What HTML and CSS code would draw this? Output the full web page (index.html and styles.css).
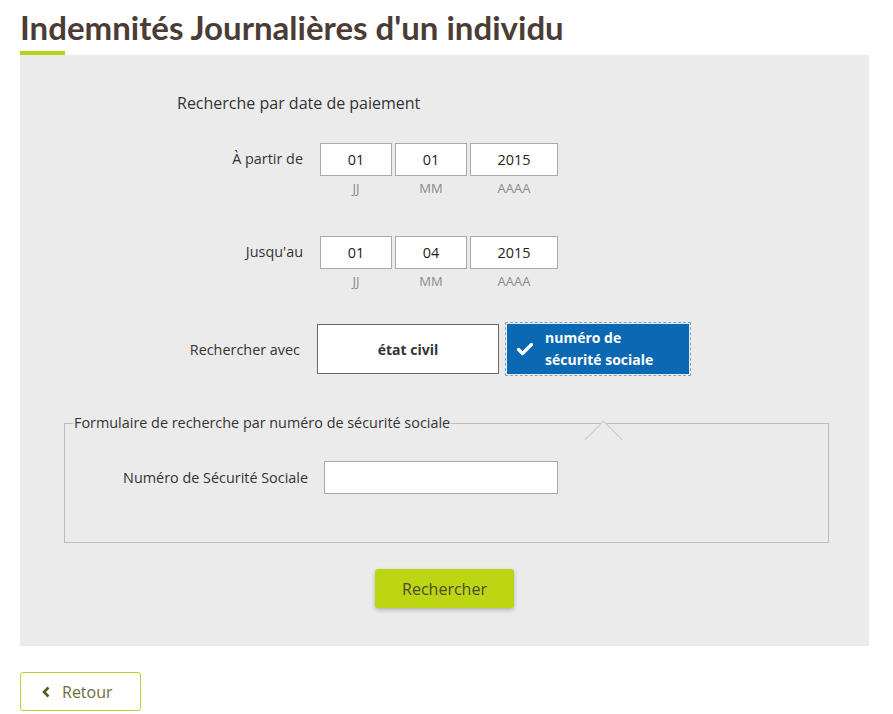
FILE: index.html
```html
<!DOCTYPE html>
<html lang="fr">
<head>
    <meta charset="UTF-8">
    <meta name="viewport" content="width=device-width, initial-scale=1.0">
    <title>Indemnités Journalières d'un individu</title>
    <link rel="stylesheet" href="styles.css">
</head>
<body>
    <h1 class="page-title">Indemnités Journalières d'un individu</h1>
    <div class="panel">
        <h2 class="panel-title">Recherche par date de paiement</h2>

        <div class="row">
            <label class="row-label">À partir de</label>
            <div class="date-group">
                <div class="date-part">
                    <input class="field field-short" type="text" value="01">
                    <span class="hint">JJ</span>
                </div>
                <div class="date-part">
                    <input class="field field-short" type="text" value="01">
                    <span class="hint">MM</span>
                </div>
                <div class="date-part">
                    <input class="field field-year" type="text" value="2015">
                    <span class="hint">AAAA</span>
                </div>
            </div>
        </div>

        <div class="row row-second">
            <label class="row-label">Jusqu'au</label>
            <div class="date-group">
                <div class="date-part">
                    <input class="field field-short" type="text" value="01">
                    <span class="hint">JJ</span>
                </div>
                <div class="date-part">
                    <input class="field field-short" type="text" value="04">
                    <span class="hint">MM</span>
                </div>
                <div class="date-part">
                    <input class="field field-year" type="text" value="2015">
                    <span class="hint">AAAA</span>
                </div>
            </div>
        </div>

        <div class="row row-toggle">
            <label class="row-label toggle-label">Rechercher avec</label>
            <div class="toggle-group">
                <button class="toggle" type="button">état civil</button>
                <button class="toggle toggle-active" type="button">
                    <svg class="check" width="16" height="14" viewBox="0 0 16 14">
                        <path d="M1.5 7.5 L5.5 11.5 L14.5 2.5" fill="none" stroke="#fff" stroke-width="3.2" stroke-linecap="round" stroke-linejoin="round"/>
                    </svg>
                    <span>numéro de<br>sécurité sociale</span>
                </button>
            </div>
        </div>

        <fieldset class="subform">
            <legend>Formulaire de recherche par numéro de sécurité sociale</legend>
            <span class="notch"></span>
            <div class="row">
                <label class="row-label nss-label">Numéro de Sécurité Sociale</label>
                <input class="field field-nss" type="text">
            </div>
        </fieldset>

        <div class="actions">
            <button class="btn-search" type="submit">Rechercher</button>
        </div>
    </div>

    <button class="btn-back" type="button">
        <svg width="10" height="12" viewBox="0 0 10 12">
            <path d="M7.5 1.5 L3 6 L7.5 10.5" fill="none" stroke="#5a5a1e" stroke-width="2.6"/>
        </svg>
        Retour
    </button>
</body>
</html>
```

FILE: styles.css
```css
body {
    margin: 0;
    padding: 0 24px 0 20px;
    font-family: "Open Sans", "Liberation Sans", sans-serif;
    color: #333;
    background: #fff;
}
.page-title {
    position: relative;
    margin: 0;
    padding-top: 8px;
    height: 55px;
    box-sizing: border-box;
    font-family: Lato, "Open Sans", sans-serif;
    font-weight: 700;
    font-size: 33px;
    line-height: 38px;
    color: #4b3c35;
}
.page-title::after {
    content: "";
    position: absolute;
    left: 0;
    bottom: 0;
    width: 45px;
    height: 4px;
    background: #b6d21c;
}
.panel {
    background: #ebebeb;
    padding: 37px 0 38px;
}
.panel-title {
    margin: 0 0 29px 157px;
    font-size: 16px;
    font-weight: 400;
    line-height: 22px;
    color: #333;
}
.row {
    display: flex;
    align-items: flex-start;
}
.row-second {
    margin-top: 39px;
}
.row-toggle {
    margin-top: 34px;
    align-items: center;
}
.row-label {
    width: 300px;
    box-sizing: border-box;
    padding-right: 17px;
    text-align: right;
    font-size: 14.4px;
    line-height: 31px;
    color: #333;
}
.toggle-label {
    width: 297px;
}
.date-group {
    display: flex;
    gap: 3px;
}
.date-part {
    display: flex;
    flex-direction: column;
    align-items: center;
}
.field {
    box-sizing: border-box;
    height: 33px;
    border: 1px solid #a9a9a9;
    background: #fff;
    font-family: inherit;
    font-size: 14.4px;
    color: #222;
    text-align: center;
    padding: 0;
}
.field-short {
    width: 72px;
}
.field-year {
    width: 88px;
}
.hint {
    margin-top: 3px;
    font-size: 13px;
    line-height: 18px;
    color: #8a8a8a;
}
.toggle-group {
    display: flex;
    align-items: center;
    gap: 8px;
}
.toggle {
    box-sizing: border-box;
    width: 182px;
    height: 50px;
    border: 1px solid #666;
    background: #fff;
    font-family: inherit;
    font-size: 14px;
    font-weight: 700;
    color: #333;
}
.toggle-active {
    display: flex;
    align-items: center;
    gap: 12px;
    padding: 0 0 0 10px;
    border: none;
    background: #0b69b3;
    color: #fff;
    text-align: left;
    line-height: 22px;
    outline: 1px dashed #7aa7d0;
    outline-offset: 1px;
}
.subform {
    position: relative;
    margin: 40px 40px 0 44px;
    padding: 29px 0 48px;
    border: 1px solid #bdbdbd;
}
.subform legend {
    margin-left: 8px;
    padding: 0 1px;
    font-size: 14.4px;
    line-height: 18px;
    color: #333;
}
.notch {
    position: absolute;
    left: 525px;
    top: -6px;
    width: 26px;
    height: 26px;
    background: #ebebeb;
    border-top: 1px solid #c6c6c6;
    border-left: 1px solid #c6c6c6;
    transform: rotate(45deg);
}
.nss-label {
    width: 259px;
    padding-right: 16px;
    line-height: 33px;
}
.field-nss {
    width: 234px;
}
.actions {
    display: flex;
    justify-content: center;
    margin-top: 26px;
}
.btn-search {
    width: 139px;
    height: 39px;
    border: none;
    border-radius: 3px;
    background: #bdd613;
    color: #4a4a2c;
    font-family: inherit;
    font-size: 16px;
    box-shadow: 0 2px 4px rgba(0, 0, 0, 0.25);
    cursor: pointer;
}
.btn-back {
    display: flex;
    align-items: center;
    gap: 11px;
    margin-top: 26px;
    width: 121px;
    height: 39px;
    padding: 0 0 0 20px;
    border: 1px solid #b9d42e;
    border-radius: 3px;
    background: #fff;
    color: #6f6b3c;
    font-family: inherit;
    font-size: 16px;
    cursor: pointer;
}
```
